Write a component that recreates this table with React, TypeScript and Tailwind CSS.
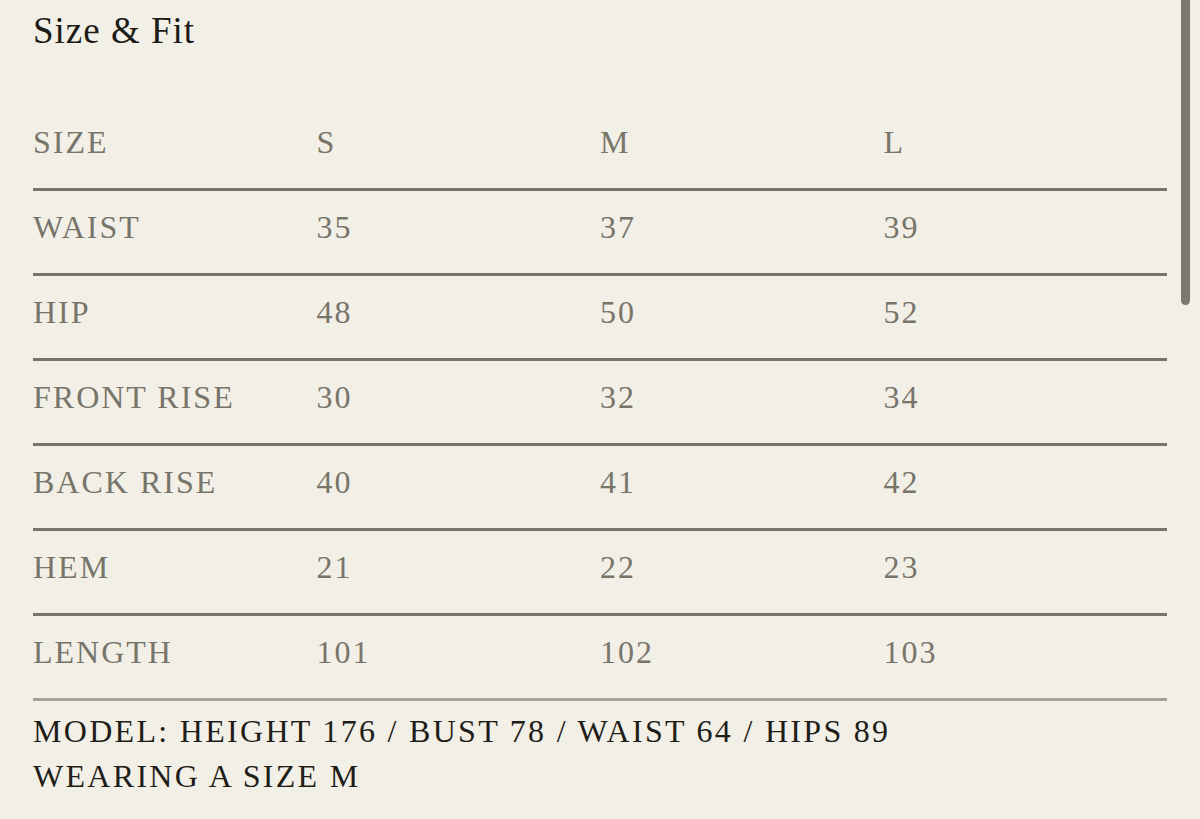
import React from "react";

const rows = [
  { label: "WAIST", s: "35", m: "37", l: "39" },
  { label: "HIP", s: "48", m: "50", l: "52" },
  { label: "FRONT RISE", s: "30", m: "32", l: "34" },
  { label: "BACK RISE", s: "40", m: "41", l: "42" },
  { label: "HEM", s: "21", m: "22", l: "23" },
  { label: "LENGTH", s: "101", m: "102", l: "103" },
];

function Row({
  cells,
  last,
}: {
  cells: string[];
  last?: boolean;
}) {
  return (
    <div
      className={`grid grid-cols-4 pt-[18px] pb-[28px] border-b-[3px] ${
        last ? "border-[#a5a397]" : "border-[#77756b]"
      }`}
    >
      {cells.map((c, i) => (
        <div key={i} className="text-[32px] leading-[36px] tracking-[2px] text-[#77746a]">
          {c}
        </div>
      ))}
    </div>
  );
}

export default function App() {
  return (
    <main
      className="relative min-h-[819px] w-full bg-[#f2efe6] overflow-hidden"
      style={{ fontFamily: '"Liberation Serif", "Times New Roman", serif' }}
    >
      <div className="pl-[33px] pr-[33px] pt-[9px]">
        <h2 className="text-[37px] leading-[44px] tracking-[1px] text-[#1d1b17]">Size &amp; Fit</h2>

        <div className="mt-[53px]">
          <Row cells={["SIZE", "S", "M", "L"]} />
          {rows.map((r, i) => (
            <Row
              key={r.label}
              cells={[r.label, r.s, r.m, r.l]}
              last={i === rows.length - 1}
            />
          ))}
        </div>

        <div className="pt-[8px] text-[32px] leading-[45px] tracking-[2.3px] text-[#1f1d18]">
          <p>MODEL: HEIGHT 176 / BUST 78 / WAIST 64 / HIPS 89</p>
          <p>WEARING A SIZE M</p>
        </div>
      </div>

      {/* scrollbar thumb */}
      <div className="absolute top-0 left-[1181px] w-[9px] h-[305px] rounded-b-full bg-[#7b796f]" />
    </main>
  );
}
